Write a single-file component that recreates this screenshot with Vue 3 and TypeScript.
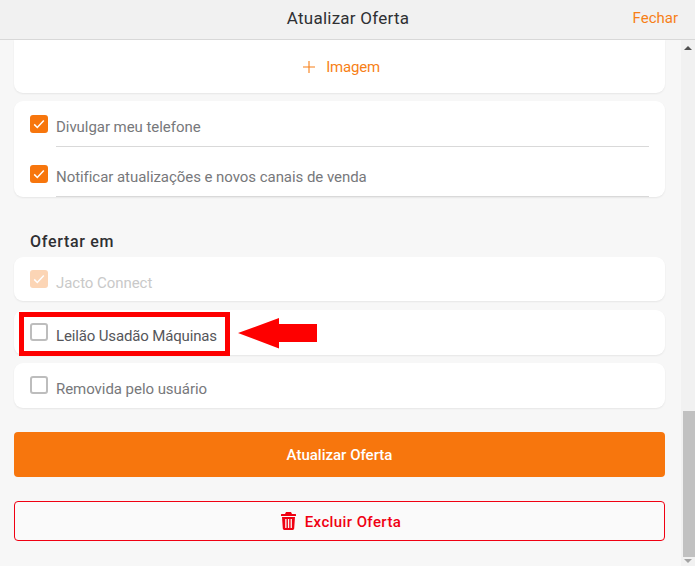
<script setup lang="ts">
interface Opt { label: string; checked: boolean; tone?: string }
const top: Opt[] = [
  { label: 'Divulgar meu telefone', checked: true },
  { label: 'Notificar atualizações e novos canais de venda', checked: true },
]
const channels: Opt[] = [
  { label: 'Jacto Connect', checked: true, tone: 'disabled' },
  { label: 'Leilão Usadão Máquinas', checked: false, tone: 'dark' },
  { label: 'Removida pelo usuário', checked: false },
]
</script>

<template>
  <div class="page">
    <header class="header">
      <span class="title">Atualizar Oferta</span>
      <a class="close">Fechar</a>
    </header>
    <div class="body">
      <main class="main">
        <section class="card image-card">
          <svg class="plus" width="14" height="14" viewBox="0 0 14 14"><path d="M7 1v12M1 7h12" stroke="#f77f17" stroke-width="1.1" fill="none" /></svg>
          <span>Imagem</span>
        </section>
        <section class="card list-card">
          <label v-for="o in top" :key="o.label" class="top-row">
            <span class="box on">
              <svg width="18" height="18" viewBox="0 0 18 18"><path d="M4.2 9.400l3.100 3.100 6.500-7" stroke="#fff" stroke-width="1.500" fill="none" /></svg>
            </span>
            <span class="top-label">{{ o.label }}</span>
          </label>
        </section>
        <h2 class="heading">Ofertar em</h2>
        <div class="channels">
          <section v-for="o in channels" :key="o.label" class="card channel" :class="o.tone">
            <span class="box" :class="{ on: o.checked }">
              <svg v-if="o.checked" width="18" height="18" viewBox="0 0 18 18"><path d="M4.2 9.400l3.100 3.100 6.500-7" stroke="#fff" stroke-width="1.500" fill="none" /></svg>
            </span>
            <span class="channel-label">{{ o.label }}</span>
          </section>
        </div>
        <button class="btn primary">Atualizar Oferta</button>
        <button class="btn danger">
          <svg width="15" height="18" viewBox="0 0 15 18"><path fill="#f00012" d="M5 0h5l1 2h3.500a.5.5 0 0 1 .5.500V4H0V2.500A.5.5 0 0 1 .5 2H4zM1 5h13l-.8 11.600A1.500 1.500 0 0 1 11.700 18H3.300a1.500 1.500 0 0 1-1.500-1.400zM4.200 7v9h1.300V7zm2.700 0v9h1.300V7zm2.700 0v9h1.300V7z" /></svg>
          <span>Excluir Oferta</span>
        </button>
      </main>
      <div class="scrollbar">
        <span class="arrow up"></span>
        <span class="thumb"></span>
        <span class="arrow down"></span>
      </div>
    </div>
    <div class="highlight"></div>
    <svg class="pointer" width="80" height="31" viewBox="0 0 80 31"><path d="M0 15L41 0V6H79V24H41V30.500Z" fill="#fe0000" /></svg>
  </div>
</template>

<style>
html, body { margin: 0; background: #f7f7f7; }
</style>

<style scoped>
.page {
  position: relative;
  width: 695px;
  height: 566px;
  overflow: hidden;
  display: flex;
  flex-direction: column;
  background: #f7f7f7;
  font-family: Roboto, "Noto Sans", sans-serif;
}
.header {
  height: 39px;
  flex: none;
  display: flex;
  align-items: center;
  justify-content: center;
  position: relative;
  background: #f1f1f1;
  border-bottom: 1px solid #d8d8d8;
}
.title {
  font-size: 17px;
  letter-spacing: 0.25px;
  color: #2f3033;
  padding-left: 1px;
  margin-top: -4px;
}
.close {
  position: absolute;
  right: 17px;
  top: 9px;
  font-size: 15px;
  color: #f77f17;
}
.body { flex: 1; min-height: 0; display: flex; }
.main {
  flex: 1;
  min-width: 0;
  padding: 0 16px 0 14px;
  display: flex;
  flex-direction: column;
}
.card {
  background: #fff;
  border-radius: 9px;
  box-shadow: 0 1px 2px rgba(0, 0, 0, 0.07);
}
.image-card {
  height: 53px;
  flex: none;
  border-radius: 0 0 9px 9px;
  display: flex;
  align-items: center;
  justify-content: center;
  gap: 10px;
  color: #f77f17;
  font-size: 15px;
  letter-spacing: -0.2px;
  padding-left: 3px;
  padding-top: 1px;
  box-sizing: border-box;
}
.list-card {
  margin-top: 8px;
  height: 96px;
  flex: none;
  padding: 5px 16px 0;
  box-sizing: border-box;
}
.top-row {
  height: 41px;
  display: flex;
  align-items: flex-start;
  gap: 8px;
  padding-top: 9px;
  box-sizing: border-box;
  margin-bottom: 9px;
  position: relative;
}
.top-row::after {
  content: "";
  position: absolute;
  left: 26px;
  right: 0;
  bottom: 0;
  height: 1px;
  background: #d9d9d9;
}
.top-label, .channel-label {
  font-size: 15px;
  letter-spacing: -0.05px;
  line-height: 18px;
  color: #77787b;
  padding-top: 3px;
}
.channel-label { padding-top: 4px; }
.box {
  width: 18px;
  height: 18px;
  flex: none;
  border-radius: 3px;
  box-sizing: border-box;
  border: 2px solid #bdbdbd;
  background: #fff;
  display: block;
}
.box.on {
  border: 0;
  background: #f7760d;
}
.box svg { display: block; }
.heading {
  margin: 35px 0 0 16px;
  font-size: 16px;
  letter-spacing: 0.7px;
  line-height: 20px;
  font-weight: 500;
  color: #2f3033;
}
.channels {
  margin-top: 5px;
  display: flex;
  flex-direction: column;
  gap: 8.500px;
}
.channel {
  height: 45px;
  padding: 13px 16px 0;
  box-sizing: border-box;
  display: flex;
  gap: 8px;
  align-items: flex-start;
}
.channel.disabled { height: 44px; }
.channel.disabled .box { opacity: 0.3; }
.channel.disabled .channel-label { color: #c9c9c9; }
.channel.dark .channel-label { color: #55565a; letter-spacing: -0.15px; }
.btn {
  flex: none;
  display: flex;
  align-items: center;
  justify-content: center;
  font-family: inherit;
  font-size: 15px;
  border-radius: 4px;
  padding: 0;
}
.primary {
  margin-top: 24px;
  height: 45px;
  padding-top: 1px;
  background: #f7760d;
  border: 0;
  color: #fff;
  font-weight: 500;
}
.danger {
  margin-top: 24px;
  height: 40px;
  gap: 9px;
  padding-left: 3px;
  letter-spacing: 0.4px;
  background: #fafafa;
  border: 1px solid #f00012;
  color: #f00012;
  font-weight: 500;
}
.danger span { position: relative; top: 1px; }
.scrollbar {
  width: 14px;
  flex: none;
  background: #f1f1f1;
  position: relative;
}
.thumb {
  position: absolute;
  right: 0;
  top: 371px;
  width: 12px;
  height: 146px;
  background: #c1c1c1;
}
.arrow {
  position: absolute;
  right: 3px;
  width: 0;
  height: 0;
  border-left: 4px solid transparent;
  border-right: 4px solid transparent;
}
.arrow.up { top: 6px; border-bottom: 4px solid #505050; }
.arrow.down { bottom: 3px; border-top: 4px solid #a3a3a3; }
.highlight {
  position: absolute;
  left: 19px;
  top: 312px;
  width: 211px;
  height: 44px;
  box-sizing: border-box;
  border: 5px solid #fe0000;
}
.pointer {
  position: absolute;
  left: 238px;
  top: 318px;
}
</style>
